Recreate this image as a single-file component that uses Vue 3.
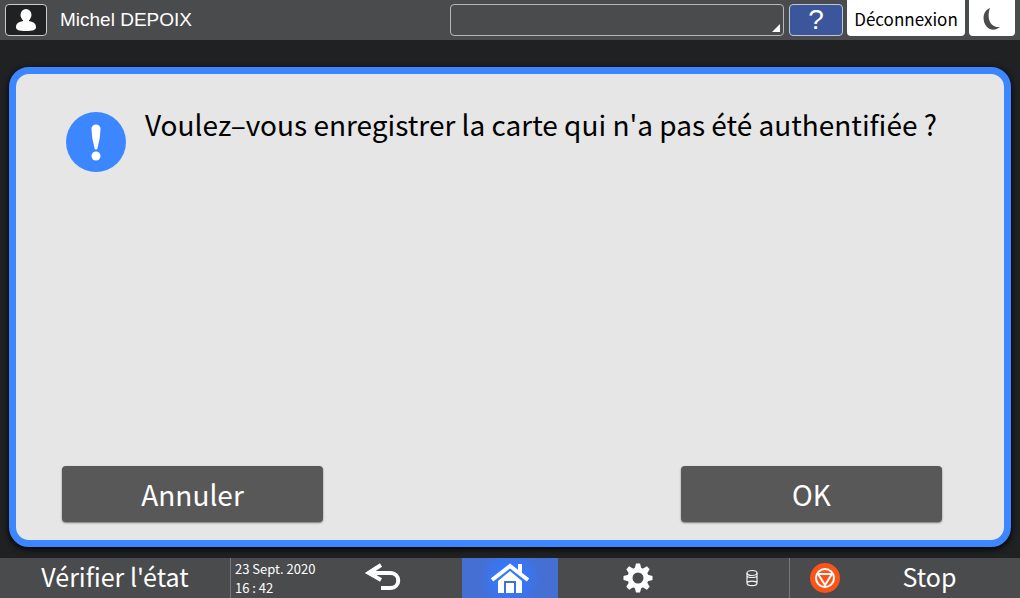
<script setup>
import { ref } from 'vue'

const job = ref('')
const userName = 'Michel DEPOIX'
const gearTeeth = [0, 45, 90, 135, 180, 225, 270, 315]
</script>

<template>
  <div class="screen">
    <header class="topbar">
      <button class="user" aria-label="Utilisateur">
        <svg width="22" height="24" viewBox="0 0 22 24" aria-hidden="true">
          <ellipse cx="11" cy="7" rx="5.500" ry="6" />
          <path d="M8 11h6v2c5 1 7 3 7 6c0 3-3 4-10 4s-10-1-10-4c0-3 2-5 7-6z" />
        </svg>
      </button>
      <span class="name">{{ userName }}</span>
      <div class="picker">
        <select v-model="job" aria-label="Messages"><option value=""></option></select>
      </div>
      <button class="help" aria-label="Aide">?</button>
      <button class="logout">Déconnexion</button>
      <button class="sleep" aria-label="Veille">
        <svg width="18" height="24" viewBox="0 0 18 24" aria-hidden="true">
          <path d="M7 1C-1 4-1 15 4 20c4 4 9 3 13 0C8 21 3 12 7 1z" />
        </svg>
      </button>
    </header>

    <main class="stage">
      <section class="dialog" role="dialog" aria-labelledby="question">
        <div class="message">
          <svg class="alert" width="60" height="60" viewBox="0 0 60 60" aria-hidden="true">
            <circle cx="30" cy="30" r="30" fill="#3c87ff" />
            <path d="M25.500 16.500a4.500 4 0 0 1 9 0Q34.500 26 31.500 36a1.500 1.500 0 0 1-3 0Q25.500 26 25.500 16.500z" fill="#fff" />
            <circle cx="30" cy="44" r="4.500" fill="#fff" />
          </svg>
          <h1 id="question">Voulez–vous enregistrer la carte qui n'a pas été authentifiée ?</h1>
        </div>
        <div class="actions">
          <button class="action">Annuler</button>
          <button class="action">OK</button>
        </div>
      </section>
    </main>

    <footer class="bottombar">
      <button class="status">Vérifier l'état</button>
      <div class="clock"><span>23 Sept. 2020</span><span>16 : 42</span></div>
      <button class="back" aria-label="Retour">
        <svg width="38" height="30" viewBox="0 0 38 30" aria-hidden="true">
          <path d="M17 2L5 10l12 7M5 10h21c11 0 11 15 0 15h-9" fill="none" stroke="#fff" stroke-width="4" />
          <path d="M1 10L12 3v13z" fill="#fff" />
        </svg>
      </button>
      <button class="home" aria-label="Accueil">
        <svg width="38" height="32" viewBox="0 0 38 32" aria-hidden="true">
          <path d="M1 18L19 4l18 14" fill="none" stroke="#fff" stroke-width="4" />
          <path d="M27 2h4v12l-4-4z" fill="#fff" />
          <path d="M7 19L19 9l12 10v12H7z" fill="#fff" />
          <path d="M14 31V20h10v11" fill="none" stroke="#3b6fe4" stroke-width="2" />
        </svg>
      </button>
      <button class="settings" aria-label="Réglages">
        <svg width="30" height="30" viewBox="-15 -15 30 30" aria-hidden="true">
          <circle r="8" fill="none" stroke="#fff" stroke-width="5" />
          <path v-for="a in gearTeeth" :key="a" d="M-3.500-9L-2-14.500H2L3.500-9z" :transform="`rotate(${a})`" fill="#fff" />
        </svg>
      </button>
      <div class="storage">
        <svg width="12" height="18" viewBox="0 0 12 18" role="img" aria-label="Mémoire" fill="none" stroke="#f4f4f4" stroke-width="1.200">
          <ellipse cx="6" cy="4" rx="5" ry="2.500" />
          <path d="M1 4v10c0 3.500 10 3.500 10 0V4M1 7c1 2 9 2 10 0M1 14c1-2.500 9-2.500 10 0" />
        </svg>
      </div>
      <button class="stop">
        <svg width="30" height="30" viewBox="0 0 30 30" aria-hidden="true">
          <circle cx="15" cy="15" r="15" fill="#fb5318" />
          <g fill="none" stroke="#fff" stroke-width="2">
            <circle cx="15" cy="15" r="9" />
            <path d="M8 11h14l-7 11z" stroke-linejoin="round" />
          </g>
        </svg>
        <span>Stop</span>
      </button>
    </footer>
  </div>
</template>

<style>
body {
  margin: 0;
  background: #202123;
}
</style>

<style scoped>
.screen {
  min-height: 100vh;
  display: flex;
  flex-direction: column;
  background: #202123;
  font-family: "Noto Sans CJK SC", sans-serif;
  color: #fff;
}
button {
  padding: 0;
  margin: 0;
  border: 0;
  background: none;
  color: inherit;
  font-family: inherit;
  white-space: nowrap;
  cursor: pointer;
}
svg {
  display: block;
  flex: none;
}
.topbar {
  box-sizing: border-box;
  height: 40px;
  padding: 0 5px 4px;
  display: flex;
  align-items: flex-end;
  background: #4a4b4d;
}
.topbar button {
  box-sizing: border-box;
  display: flex;
  flex: none;
  justify-content: center;
  align-items: center;
}
.topbar .user {
  width: 42px;
  height: 32px;
  border: 1px solid #ccc;
  border-radius: 4px;
  background: #202123;
  fill: #fff;
}
.name {
  flex: 1;
  margin-left: 13px;
  font-family: "Liberation Sans", sans-serif;
  font-size: 19px;
  line-height: 32px;
}
.picker {
  position: relative;
  flex: 0 1 334px;
  height: 32px;
}
.picker select {
  appearance: none;
  box-sizing: border-box;
  display: block;
  width: 100%;
  height: 100%;
  border: 1px solid #b8b8b8;
  border-radius: 4px;
  background: transparent;
  color: #fff;
}
.picker::after {
  content: "";
  position: absolute;
  right: 4px;
  bottom: 4px;
  border-left: 8px solid transparent;
  border-bottom: 8px solid #fff;
  pointer-events: none;
}
.topbar .help {
  width: 54px;
  height: 32px;
  margin-left: 5px;
  border: 1px solid #c0c5d8;
  border-radius: 4px;
  background: #3c569c;
  font-family: "Liberation Sans", sans-serif;
  font-size: 28px;
}
.topbar .logout {
  width: 118px;
  height: 36px;
  margin-left: 4px;
  border-radius: 0 0 4px 4px;
  background: #fff;
  color: #000;
  font-size: 17px;
}
.topbar .sleep {
  width: 46px;
  height: 36px;
  margin-left: 4px;
  padding-top: 2px;
  border-radius: 0 0 4px 4px;
  background: #fff;
  fill: #4a4b4d;
}
.stage {
  flex: 1;
  display: flex;
  padding: 27px 9px 11px;
}
.dialog {
  flex: 1;
  min-width: 0;
  display: flex;
  flex-direction: column;
  justify-content: space-between;
  padding: 28px 62px 18px 46px;
  border: 7px solid #3c87ff;
  border-radius: 20px;
  background: #e6e6e6;
  box-shadow: 0 2px 6px #000;
}
.message {
  display: flex;
  align-items: flex-start;
  padding-left: 4px;
}
.alert {
  margin-top: 10px;
}
h1 {
  margin: 0 0 0 19px;
  color: #000;
  font-size: 28px;
  font-weight: 400;
  line-height: 44px;
  white-space: nowrap;
}
.actions {
  display: flex;
  justify-content: space-between;
}
.action {
  width: 261px;
  height: 56px;
  border-radius: 4px;
  background: #585858;
  box-shadow: 0 1px 2px #777;
  font-size: 28px;
}
.bottombar {
  height: 40px;
  display: grid;
  grid-template-columns: 230fr 96fr 136fr 96fr 160fr 71fr 231fr;
  background: #4a4b4d;
}
.bottombar > * {
  box-sizing: border-box;
  min-width: 0;
  display: flex;
  justify-content: center;
  align-items: center;
}
.status,
.stop {
  font-size: 25px;
  line-height: 36px;
}
.bottombar .status {
  padding-bottom: 4px;
}
.clock {
  flex-direction: column;
  border-left: 1px solid #77787a;
  padding-left: 4px;
  font-size: 13px;
  line-height: 19px;
  white-space: nowrap;
}
.bottombar .clock {
  align-items: flex-start;
}
.bottombar .back {
  padding-right: 22px;
}
.home {
  background: radial-gradient(circle, #3478ff 20%, #456fd2 60%);
}
.storage {
  padding-right: 4px;
}
.bottombar .stop {
  justify-content: flex-start;
  border-left: 1px solid #77787a;
  padding-left: 20px;
}
.stop span {
  flex: 1;
  padding: 0 1px 4px 0;
}
</style>
